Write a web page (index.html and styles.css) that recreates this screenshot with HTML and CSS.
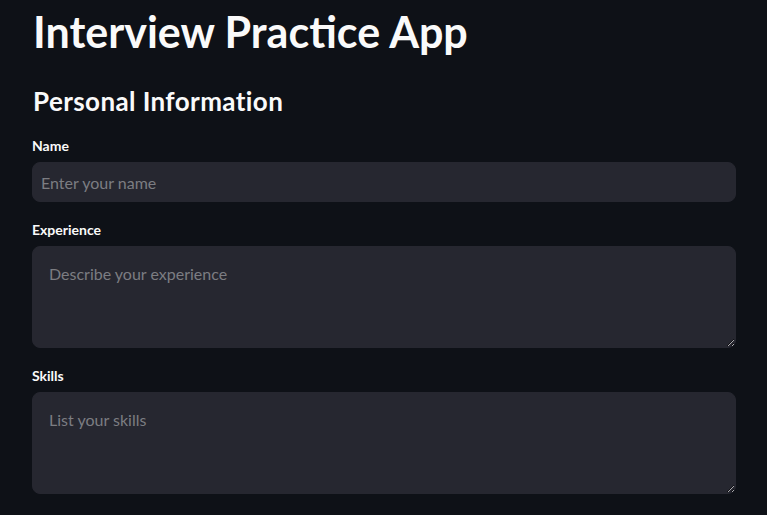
FILE: index.html
```html
<!DOCTYPE html>
<html lang="en">
<head>
<meta charset="utf-8">
<title>Interview Practice App</title>
<link rel="stylesheet" href="styles.css">
</head>
<body>
<main class="main">
  <h1 class="title">Interview Practice App</h1>
  <h2 class="subtitle">Personal Information</h2>
  <div class="field">
    <label class="label" for="name">Name</label>
    <input class="text-input" id="name" type="text" placeholder="Enter your name">
  </div>
  <div class="field">
    <label class="label" for="exp">Experience</label>
    <textarea class="text-area" id="exp" placeholder="Describe your experience"></textarea>
  </div>
  <div class="field">
    <label class="label" for="skills">Skills</label>
    <textarea class="text-area" id="skills" placeholder="List your skills"></textarea>
  </div>
</main>
</body>
</html>
```
FILE: styles.css
```css
html, body {
  margin: 0;
  padding: 0;
  background: #0e1117;
  color: #fafafa;
  color-scheme: dark;
  font-family: Lato, "Open Sans", sans-serif;
}
.main {
  display: flex;
  flex-direction: column;
  padding: 6px 31px 0 32px;
}
.title {
  margin: 0;
  font-size: 43px;
  line-height: 52px;
  font-weight: 700;
  padding-left: 1px;
}
.subtitle {
  margin: 28px 0 0;
  font-size: 26px;
  line-height: 31px;
  font-weight: 700;
  letter-spacing: 0.4px;
  padding-left: 1px;
}
.field {
  display: flex;
  flex-direction: column;
}
.subtitle + .field {
  margin-top: 20px;
}
.field + .field {
  margin-top: 19px;
}
.label {
  font-size: 14px;
  line-height: 17px;
  font-weight: 700;
  margin-bottom: 8px;
}
.text-input,
.text-area {
  box-sizing: border-box;
  width: 100%;
  margin: 0;
  background: #262730;
  border: 1px solid #262730;
  border-radius: 8px;
  color: #fafafa;
  font-family: Lato, "Open Sans", sans-serif;
  font-size: 16px;
  outline: none;
}
.text-input {
  height: 40px;
  padding: 0 8px;
}
.text-area {
  height: 102px;
  padding: 14px 16px;
  line-height: 1.6;
  resize: vertical;
}
.text-input::placeholder,
.text-area::placeholder {
  color: #7c7d82;
  opacity: 1;
}
```
